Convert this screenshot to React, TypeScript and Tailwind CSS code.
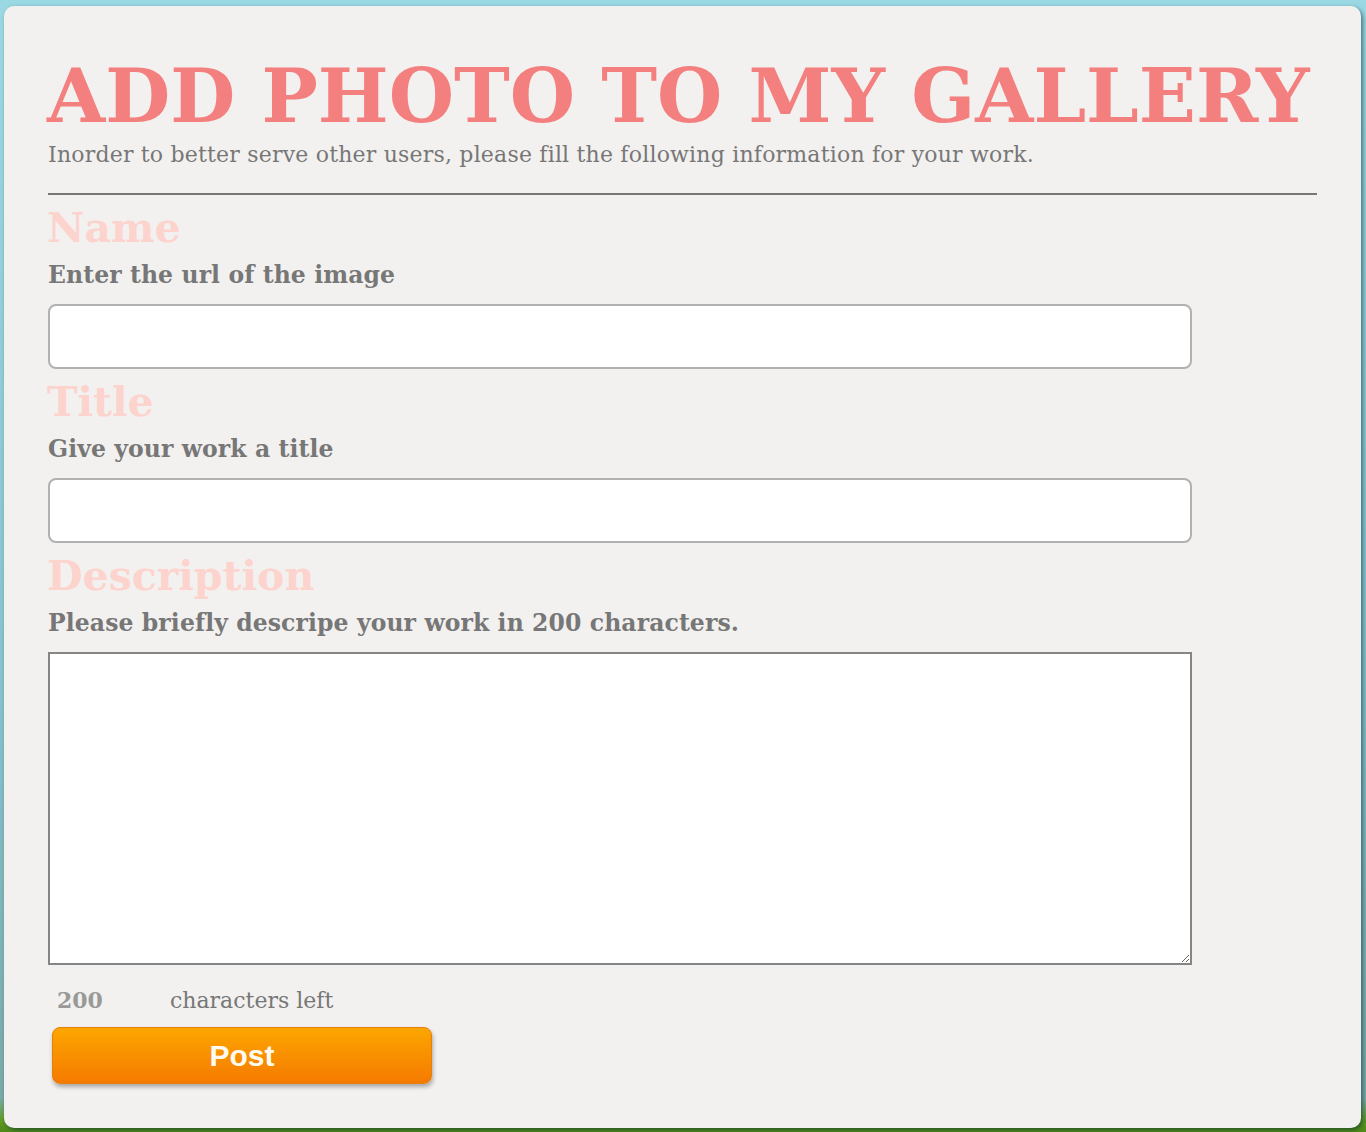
export default function App() {
    return (
        <div className="min-h-[1132px] w-full bg-[linear-gradient(to_bottom,#9ad8e3_0%,#86c3cf_60%,#7aa9a8_97%,#5f9a22_99%,#4f8a18_100%)] pt-[6px] pl-[4px]">
            <div
                className="flex h-[1122px] w-[1357px] flex-col rounded-[10px] bg-[#f2f1ef] px-[44px] pt-[50px] text-[#777777] shadow-[2px_2px_4px_rgba(0,40,50,0.55)]"
                style={{ fontFamily: '"DejaVu Serif", Georgia, serif' }}
            >
                <h1 className="-ml-[1px] whitespace-nowrap text-[75px] font-bold leading-[80px] text-[#f47f7f]">
                    ADD PHOTO TO MY GALLERY
                </h1>
                <p className="mt-[5px] text-[22px] leading-[28px] tracking-[0.2px]">
                    Inorder to better serve other users, please fill the following information for your work.
                </p>
                <hr className="mt-[24px] w-[1269px] border-0 border-t-2 border-[#777777]" />

                <Field heading="Name" label="Enter the url of the image" />
                <Field heading="Title" label="Give your work a title" />

                <Heading text="Description" />
                <Label text="Please briefly descripe your work in 200 characters." />
                <textarea className="mt-[15px] h-[313px] w-[1144px] resize border-2 border-[#858585] bg-white outline-none" />

                <div className="mt-[21px] flex items-baseline text-[22px] leading-[28px]">
                    <span className="ml-[9px] w-[113px] font-bold text-[#999999]">200</span>
                    <span>characters left</span>
                </div>
                <button
                    className="mt-[12px] ml-[4px] h-[57px] w-[380px] rounded-[8px] border border-[#e5800a] bg-[linear-gradient(to_bottom,#fca600,#f57a00)] text-[30px] font-bold text-[#fffbf2] shadow-[1px_3px_4px_rgba(0,0,0,0.3)]"
                    style={{ fontFamily: '"Liberation Sans", Arial, sans-serif' }}
                >
                    Post
                </button>
            </div>
        </div>
    );
}

function Heading({ text }: { text: string }) {
    return <h2 className="mt-[11px] -ml-[1px] text-[41px] font-bold leading-[44px] text-[#fdd3cd]">{text}</h2>;
}

function Label({ text }: { text: string }) {
    return <p className="mt-[11px] text-[23.5px] font-bold leading-[28px] tracking-[0.1px]">{text}</p>;
}

function Field({ heading, label }: { heading: string; label: string }) {
    return (
        <div className="flex flex-col">
            <Heading text={heading} />
            <Label text={label} />
            <input
                type="text"
                className="mt-[15px] h-[65px] w-[1144px] rounded-[8px] border-2 border-[#b1b1b1] bg-white px-3 outline-none"
            />
        </div>
    );
}
